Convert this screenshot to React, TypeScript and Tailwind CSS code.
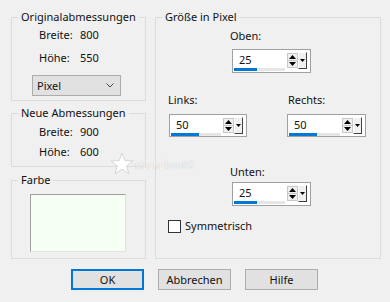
import React from "react";

interface SpinnerProps {
  value: string;
  className: string;
  barClass: string;
}

const Spinner = (props: SpinnerProps) => {
  const { value, className, barClass } = props;

  return (
    <div className={`flex border border-[#a0a0a0] bg-white pl-[1px] pt-[1px] ${className}`}>
      <div className="flex-1 flex flex-col">
        <span className="pl-[5px] leading-[16px] h-[17px] pt-[1px]">{value}</span>
        <div className="h-[3px] bg-[#e6e6e6] mr-[2px] flex">
          <div className={`h-full bg-[#0078d7] ${barClass}`} />
        </div>
      </div>
      <div className="flex flex-col w-[11px] h-[15px] mt-[2px] border border-[#c8c8c8] bg-[#f0f0f0]">
        <div className="flex-1 flex items-center justify-center border-b border-[#c8c8c8]">
          <svg width="7" height="4" viewBox="0 0 7 4">
            <path d="M0 4 L3.5 0 L7 4 Z" fill="#000" />
          </svg>
        </div>
        <div className="flex-1 flex items-center justify-center">
          <svg width="7" height="4" viewBox="0 0 7 4">
            <path d="M0 0 L3.5 4 L7 0 Z" fill="#000" />
          </svg>
        </div>
      </div>
      <div className="w-[9px] h-[17px] mt-[1px] mr-[3px] bg-[#f0f0f0] border-t border-l border-white border-r border-b border-r-[#404040] border-b-[#404040] flex items-center justify-center">
        <svg width="5" height="3" viewBox="0 0 5 3">
          <path d="M0 0 L2.5 3 L5 0 Z" fill="#000" />
        </svg>
      </div>
    </div>
  );
};

const DimRow = ({ label, value, className }: { label: string; value: string; className: string }) => (
  <div className={`flex leading-[16px] pl-[27px] ${className}`}>
    <span className="w-[41px]">{label}</span>
    <span>{value}</span>
  </div>
);

const Legend = ({ title }: { title: string }) => (
  <legend className="ml-[6px] px-[3px] leading-[16px]">{title}</legend>
);

export default function App() {
  return (
    <div className="relative w-[390px] h-[302px] bg-[#f0f0f0] text-[11px] text-[#111] font-['Noto_Sans',sans-serif] pt-[9px]">
      <div className="flex pl-[11px] gap-[9px]">
        <div className="flex flex-col w-[135px]">
          <fieldset className="border border-[#dcdcdc] h-[92px]">
            <Legend title="Originalabmessungen" />
            <DimRow label="Breite:" value="800" className="mt-[2px]" />
            <DimRow label="Höhe:" value="550" className="mt-[7px]" />
            <div className="mt-[9px] ml-[20px] w-[89px] h-[21px] bg-[#e1e1e1] border border-[#adadad] flex items-center justify-between pl-[4px] pr-[6px]">
              <span className="leading-[16px]">Pixel</span>
              <svg width="8" height="5" viewBox="0 0 8 5">
                <path d="M0.5 0.5 L4 4 L7.5 0.5" fill="none" stroke="#444" strokeWidth="1" />
              </svg>
            </div>
          </fieldset>
          <fieldset className="border border-[#dcdcdc] h-[62px] mt-[4px]">
            <Legend title="Neue Abmessungen" />
            <DimRow label="Breite:" value="900" className="mt-[3px]" />
            <DimRow label="Höhe:" value="600" className="mt-[4px]" />
          </fieldset>
          <fieldset className="border border-[#dcdcdc] h-[87px] mt-[5px]">
            <Legend title="Farbe" />
            <div className="mt-[6px] ml-[18px] w-[96px] h-[58px] bg-[#f5fff3] border-t border-l border-[#a0a0a0] border-r border-b border-r-[#e3e3e3] border-b-[#e3e3e3]" />
          </fieldset>
        </div>

        <fieldset className="border border-[#dcdcdc] w-[226px] h-[250px]">
          <Legend title="Größe in Pixel" />
          <div className="flex flex-col">
            <span className="mt-[3px] pl-[74px] leading-[16px]">Oben:</span>
            <Spinner value="25" className="mt-[5px] ml-[76px] w-[79px] h-[24px]" barClass="w-[23px]" />
            <div className="flex mt-[19px] leading-[16px]">
              <span className="pl-[12px] w-[132px]">Links:</span>
              <span>Rechts:</span>
            </div>
            <div className="flex mt-[6px]">
              <Spinner value="50" className="ml-[13px] w-[78px] h-[23px]" barClass="w-[28px]" />
              <Spinner value="50" className="ml-[40px] w-[79px] h-[23px]" barClass="w-[28px]" />
            </div>
            <span className="mt-[27px] pl-[74px] leading-[16px]">Unten:</span>
            <Spinner value="25" className="mt-[2px] ml-[76px] w-[79px] h-[24px]" barClass="w-[23px]" />
            <div className="flex items-center mt-[12px] ml-[12px] gap-[4px]">
              <div className="w-[13px] h-[13px] bg-white border border-[#333333]" />
              <span className="leading-[16px]">Symmetrisch</span>
            </div>
          </div>
        </fieldset>
      </div>

      <div className="flex pl-[71px] gap-[14px] mt-[10px]">
        <button className="w-[73px] h-[21px] bg-[#e1e1e1] border-2 border-[#0078d7] leading-[16px]">OK</button>
        <button className="w-[73px] h-[21px] bg-[#e1e1e1] border border-[#adadad] leading-[16px]">Abbrechen</button>
        <button className="w-[73px] h-[21px] bg-[#e1e1e1] border border-[#adadad] leading-[16px]">Hilfe</button>
      </div>

      <div className="absolute left-[110px] top-[152px] flex items-end gap-[1px] pointer-events-none">
        <svg width="24" height="23" viewBox="0 0 24 23">
          <path
            d="M12 1 L14.8 8.6 L23 8.9 L16.6 13.9 L18.9 21.8 L12 17.2 L5.1 21.8 L7.4 13.9 L1 8.9 L9.2 8.6 Z"
            fill="#ffffff"
            stroke="#d6d6d6"
            strokeWidth="1"
          />
        </svg>
        <span className="italic text-[12px] leading-[14px] mb-[3px] text-white [text-shadow:0_0_1px_#a8a8a8] font-['Liberation_Serif',serif]">
          sternchen06
        </span>
      </div>
    </div>
  );
}
